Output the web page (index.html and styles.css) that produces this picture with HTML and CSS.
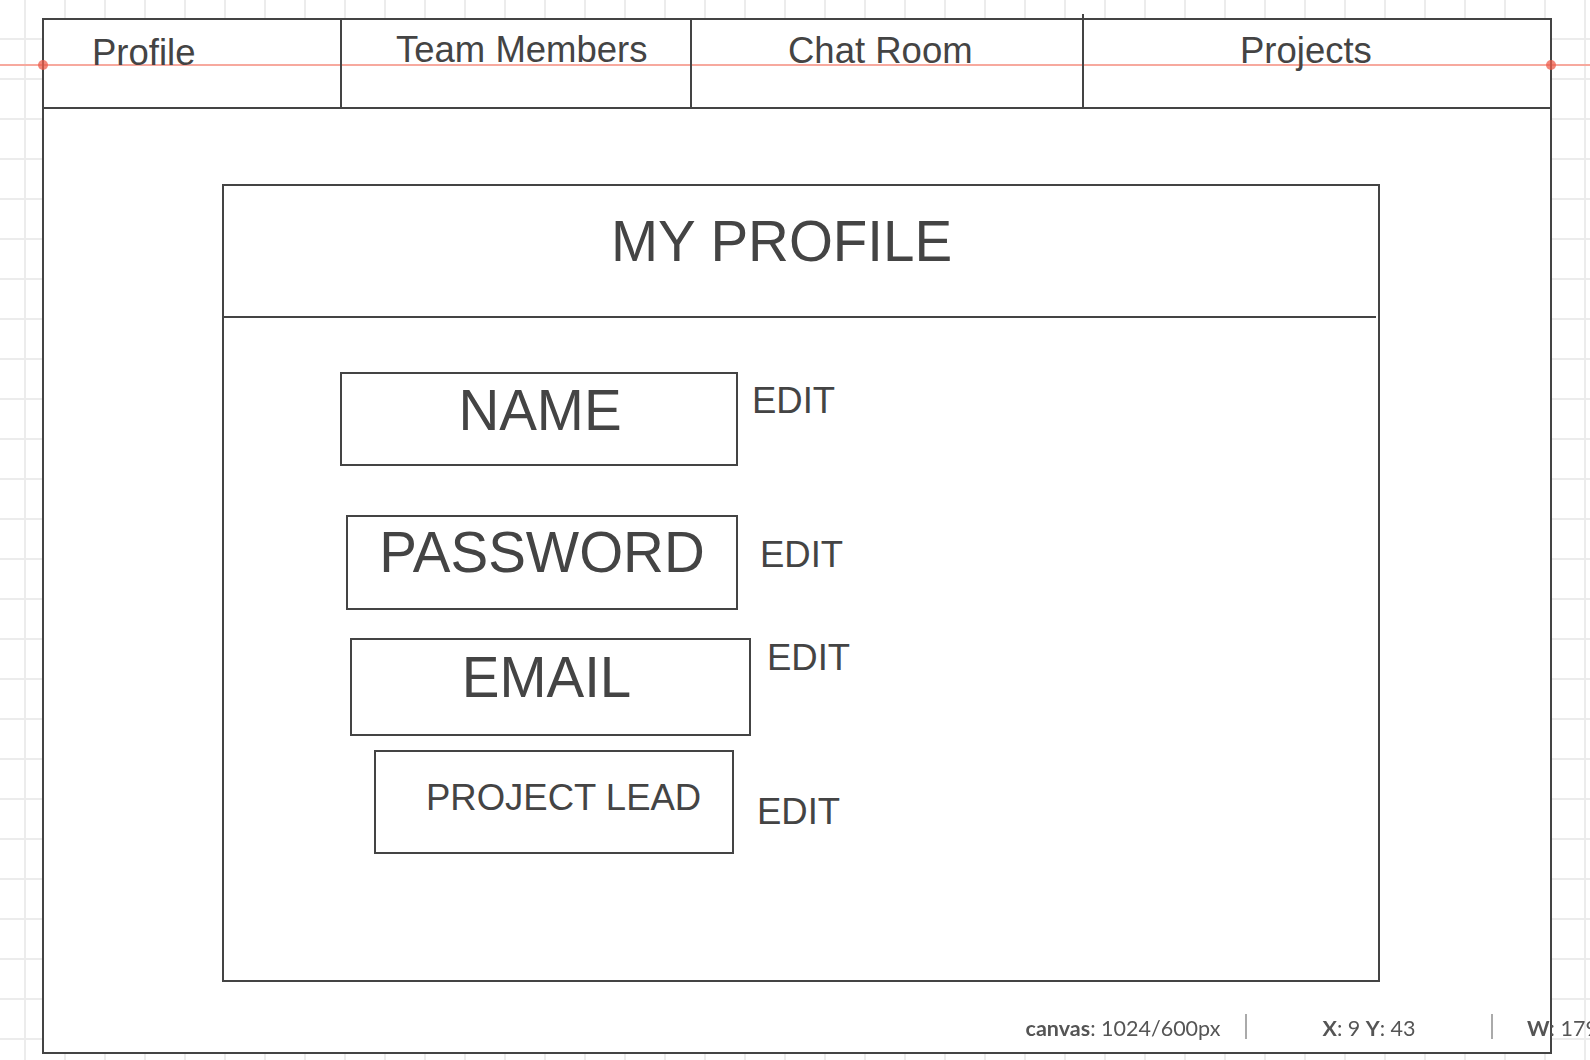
FILE: index.html
```html
<!DOCTYPE html>
<html lang="en">
<head>
  <meta charset="UTF-8" />
  <meta name="viewport" content="width=device-width, initial-scale=1.0"/>
  <title>My Profile - Wireframe</title>
  <link rel="stylesheet" href="styles.css">
</head>
<body>
  <div class="guide-dot dot-left"></div>
  <div class="guide-dot dot-right"></div>

  <div class="frame">
    <nav class="tabs">
      <div class="tab tab-profile">Profile</div>
      <div class="tab tab-team">Team Members</div>
      <div class="tab tab-chat">Chat Room</div>
      <div class="tab tab-projects">Projects</div>
    </nav>

    <main class="canvas">
      <section class="card">
        <h1 class="card-title">MY PROFILE</h1>

        <div class="fields">
          <div class="field field-name">
            <div class="field-box">NAME</div>
            <a class="edit" href="#">EDIT</a>
          </div>
          <div class="field field-password">
            <div class="field-box">PASSWORD</div>
            <a class="edit" href="#">EDIT</a>
          </div>
          <div class="field field-email">
            <div class="field-box">EMAIL</div>
            <a class="edit" href="#">EDIT</a>
          </div>
          <div class="field field-lead">
            <div class="field-box">PROJECT LEAD</div>
            <a class="edit" href="#">EDIT</a>
          </div>
        </div>
      </section>
    </main>
  </div>

  <!-- editor status bar -->
  <div class="status">
    <div class="status-cell"><b>canvas</b>: 1024/600px</div>
    <div class="status-sep"></div>
    <div class="status-cell"><b>X</b>: 9 <b>Y</b>: 43</div>
    <div class="status-sep"></div>
    <div class="status-cell status-size"><b>W</b>: 179</div>
  </div>
</body>
</html>
```

FILE: styles.css
```css
* {
  box-sizing: border-box;
}
body {
  margin: 0;
  height: 1060px;
  overflow: hidden;
  font-family: "Liberation Sans", Arial, sans-serif;
  color: #444;
  background:
    linear-gradient(to bottom, transparent 64px, #f7a99e 64px, #f7a99e 66px, transparent 66px) no-repeat,
    linear-gradient(to right, #ececec 2px, transparent 2px),
    linear-gradient(to bottom, #ececec 2px, transparent 2px),
    #fff;
  background-size: 100% 100%, 40px 40px, 40px 40px;
  background-position: 0 0, 24px 0, 0 38px;
}

/* red guide markers */
.guide-dot {
  position: absolute;
  top: 60px;
  width: 10px;
  height: 10px;
  border-radius: 50%;
  background: rgba(238, 92, 74, 0.75);
  z-index: 2;
}
.dot-left {
  left: 38px;
}
.dot-right {
  left: 1546px;
}

.frame {
  position: relative;
  margin: 18px 0 0 42px;
  width: 1510px;
  height: 1036px;
  border: 2px solid #444;
  background: #fff;
  display: flex;
  flex-direction: column;
}

.tabs {
  display: grid;
  grid-template-columns: 298px 350px 392px 466px;
  height: 89px;
  border-bottom: 2px solid #444;
  background: linear-gradient(to bottom, transparent 44px, #f7a99e 44px, #f7a99e 46px, transparent 46px);
}
.tab {
  position: relative;
  font-size: 36.5px;
  line-height: 36px;
  border-right: 2px solid #444;
  white-space: nowrap;
}
.tab-profile {
  padding: 15px 0 0 48px;
}
.tab-team {
  padding: 12px 0 0 54px;
}
.tab-chat {
  padding: 13px 0 0 96px;
}
.tab-chat::after {
  content: "";
  position: absolute;
  right: -2px;
  top: -6px;
  width: 2px;
  height: 6px;
  background: #444;
}
.tab-projects {
  border-right: none;
  padding: 13px 0 0 156px;
}

.canvas {
  flex: 1;
  padding: 75px 0 0 178px;
}

.card {
  width: 1158px;
  height: 798px;
  border: 2px solid #444;
}
.card-title {
  margin: 0 2px 0 0;
  height: 132px;
  padding: 28px 0 0 387px;
  border-bottom: 2px solid #444;
  font-size: 56.5px;
  line-height: 56px;
  font-weight: normal;
}

.fields {
  display: flex;
  flex-direction: column;
  align-items: flex-start;
}
.field {
  display: flex;
  align-items: flex-start;
}
.field-box {
  border: 2px solid #444;
  font-size: 56.5px;
  line-height: 56px;
  text-align: center;
  white-space: nowrap;
}
.edit {
  color: #444;
  text-decoration: none;
  font-size: 36.5px;
  line-height: 36px;
}

.field-name {
  margin: 54px 0 0 116px;
}
.field-name .field-box {
  width: 398px;
  height: 94px;
  padding: 9px 0 0 2px;
}
.field-name .edit {
  margin: 11px 0 0 14px;
}

.field-password {
  margin: 49px 0 0 122px;
}
.field-password .field-box {
  width: 392px;
  height: 95px;
  padding-top: 8px;
}
.field-password .edit {
  margin: 22px 0 0 22px;
}

.field-email {
  margin: 28px 0 0 126px;
}
.field-email .field-box {
  width: 401px;
  height: 98px;
  padding: 10px 8px 0 0;
}
.field-email .edit {
  margin: 2px 0 0 16px;
}

.field-lead {
  margin: 14px 0 0 150px;
}
.field-lead .field-box {
  width: 360px;
  height: 104px;
  padding: 28px 0 0 50px;
  font-size: 36.5px;
  line-height: 36px;
  text-align: left;
}
.field-lead .edit {
  margin: 44px 0 0 23px;
}

.status {
  position: fixed;
  left: 1001px;
  top: 1014px;
  display: flex;
  height: 25px;
  font-family: Lato, "Liberation Sans", sans-serif;
  font-size: 21.5px;
  line-height: 24px;
  color: #555;
  white-space: nowrap;
}
.status b {
  font-weight: bold;
}
.status-cell {
  width: 244px;
  padding-top: 2px;
  text-align: center;
}
.status-size {
  text-align: left;
  padding-left: 34px;
}
.status-sep {
  width: 2px;
  background: #aaa;
}
```
